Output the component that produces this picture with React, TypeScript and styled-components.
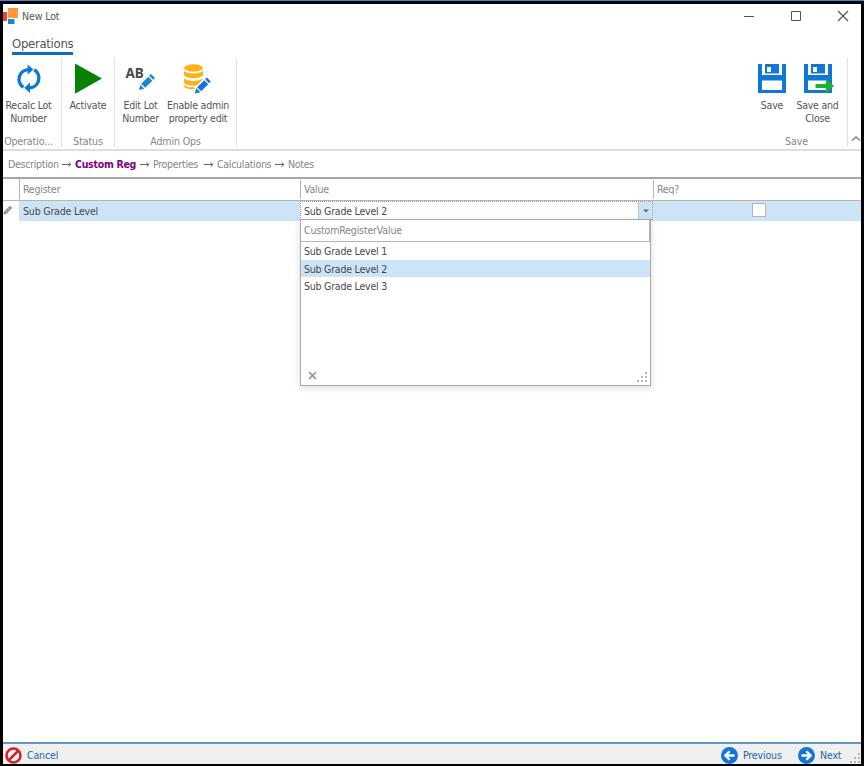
import React from "react";
import styled, { createGlobalStyle, css } from "styled-components";

const GlobalStyle = createGlobalStyle`
  *, *::before, *::after { box-sizing: border-box; }
  body { margin: 0; background: #000; }
`;

const Desktop = styled.div`
  width: 864px;
  height: 766px;
  padding: 3px 3px 2px;
  border-top: 1px solid #3a8ad0;
  background: #000;
  overflow: hidden;
  font-family: "DejaVu Sans Condensed", "DejaVu Sans", sans-serif;
  font-stretch: condensed;
  font-size: 10.5px;
  line-height: 13px;
  letter-spacing: -0.22px;
  color: #555;
`;

const Window = styled.main`
  width: 858px;
  height: 760px;
  display: flex;
  flex-direction: column;
  background: #fff;
`;

const TitleBar = styled.header`
  height: 31px;
  flex: none;
  display: flex;
  align-items: flex-start;
  svg { display: block; }
`;

const WindowTitle = styled.div`
  flex: 1;
  padding: 6px 0 0 3px;
  letter-spacing: -0.1px;
`;

const WindowButtons = styled.div`
  display: flex;
  padding: 6px 12px 0 0;
  gap: 35px;
`;

const TabStrip = styled.nav`
  height: 23px;
  flex: none;
  padding-left: 9px;
`;

const Tab = styled.div`
  width: 61px;
  height: 20px;
  border-bottom: 3px solid #0f6cbd;
  font-size: 13px;
  line-height: 18px;
  letter-spacing: -0.3px;
  white-space: nowrap;
`;

const Ribbon = styled.section`
  height: 93px;
  flex: none;
  display: flex;
  border-bottom: 2px solid #dedede;
`;

const RibbonGroup = styled.div<{ $width: number }>`
  width: ${(p) => p.$width}px;
  height: 89px;
  display: flex;
  flex-direction: column;
  border-right: 1px solid #e2e2e2;
`;

const RibbonButtons = styled.div<{ $pad?: number }>`
  height: 76px;
  flex: none;
  display: flex;
  justify-content: center;
  padding-right: ${(p) => p.$pad ?? 0}px;
`;

const RibbonButton = styled.div<{ $width: number }>`
  width: ${(p) => p.$width}px;
  display: flex;
  flex-direction: column;
  align-items: center;
  text-align: center;
  white-space: nowrap;
  svg { display: block; flex: none; margin: 4px 0 5px; }
`;

const GroupCaption = styled.div<{ $pad?: number }>`
  padding: 1px ${(p) => p.$pad ?? 0}px 0 0;
  text-align: center;
  letter-spacing: -0.1px;
  color: #858585;
  white-space: nowrap;
`;

const Spacer = styled.div`
  flex: 1;
`;

const CollapseSlot = styled.div`
  width: 13px;
  display: flex;
  align-items: flex-end;
  justify-content: flex-end;
  padding-bottom: 7px;
`;

const Breadcrumb = styled.nav`
  height: 26px;
  flex: none;
  display: flex;
  align-items: center;
  gap: 4px;
  padding: 1px 0 0 5px;
  letter-spacing: -0.28px;
  color: #858585;
  white-space: nowrap;
`;

const Step = styled.span<{ $width: number; $active?: boolean }>`
  width: ${(p) => p.$width}px;
  ${(p) =>
    p.$active &&
    css`
      font-weight: bold;
      color: #800080;
    `}
`;

const Grid = styled.section`
  flex: 1;
  border-top: 2px solid #a5a7a8;
`;

const columns = "17px 281px 353px 1fr";

const GridHeader = styled.div`
  display: grid;
  grid-template-columns: ${columns};
  height: 22px;
  border-bottom: 1px solid #b5b5b5;
  color: #858585;
`;

const HeaderCell = styled.div<{ $tall?: boolean }>`
  height: ${(p) => (p.$tall ? 21 : 19)}px;
  margin: ${(p) => (p.$tall ? "0 0 0 -1px" : "1px 0 1px -1px")};
  padding: ${(p) => (p.$tall ? 4 : 3)}px 0 0 3px;
  border-left: 1px solid #b5b5b5;
`;

const GridRow = styled.div`
  display: grid;
  grid-template-columns: ${columns};
  height: 20px;
  background: #cce4f6;
  color: #484848;
`;

const Indicator = styled.div`
  background: #fff;
  border-right: 1px solid #dcdcdc;
  padding-top: 4px;
  svg { display: block; }
`;

const Cell = styled.div`
  padding: 4px 0 0 3px;
  letter-spacing: -0.18px;
`;

const EditorCell = styled.div`
  position: relative;
  display: flex;
  height: 19px;
  margin-left: -1px;
  margin-right: 1px;
  background: #fff;
  border: 1px dotted #929292;
  border-bottom-style: solid;
`;

const EditorText = styled.div`
  flex: 1;
  padding: 3px 0 0 3px;
`;

const DropButton = styled.div`
  width: 14px;
  display: flex;
  align-items: center;
  justify-content: center;
  background: #cce4f6;
  border-left: 1px solid #aacbe2;
`;

const Popup = styled.div`
  position: absolute;
  left: -1px;
  top: 17px;
  width: 351px;
  height: 167px;
  display: flex;
  flex-direction: column;
  background: #fff;
  border: 1px solid #a9a9a9;
  box-shadow: 0 2px 7px rgba(0, 0, 0, 0.14);
`;

const PopupHeader = styled.div`
  height: 22px;
  flex: none;
  padding: 4px 0 0 3px;
  border-bottom: 1px solid #b5b5b5;
  border-right: 1px solid #b5b5b5;
  letter-spacing: -0.16px;
  color: #858585;
`;

const Option = styled.div<{ $selected?: boolean }>`
  height: 17.5px;
  flex: none;
  padding: 3px 0 0 3px;
  background: ${(p) => (p.$selected ? "#cce4f6" : "transparent")};
`;

const PopupFooter = styled.div`
  margin-top: auto;
  display: flex;
  justify-content: space-between;
  align-items: flex-end;
  padding: 0 3px 3px 7px;
  svg { display: block; }
`;

const ReqCell = styled.div`
  display: flex;
  justify-content: center;
  padding-top: 2px;
`;

const Checkbox = styled.div`
  width: 14px;
  height: 14px;
  margin-left: 3px;
  background: #fff;
  border: 1px solid #b4b4b4;
`;

const Footer = styled.footer`
  height: 22px;
  flex: none;
  display: flex;
  align-items: center;
  padding: 3px 0 0 2px;
  border-top: 2px solid #6795bc;
  background: #f0f0f0;
  letter-spacing: -0.15px;
  color: #1765a8;
  svg { display: block; }
`;

const FooterButton = styled.div<{ $width: number; $gap: number }>`
  width: ${(p) => p.$width}px;
  display: flex;
  align-items: center;
  gap: ${(p) => p.$gap}px;
`;

const GripSlot = styled.div`
  align-self: flex-end;
  padding-bottom: 1px;
`;

const AppLogo = () => (
  <svg width="16" height="20" viewBox="3 4 16 20">
    <path fill="#ef4040" d="M3 12h4v9H3z" />
    <path fill="#ff9838" d="M8 8h10v10H8z" />
    <path fill="#1c87c9" d="M8 19h6.5v5H8z" />
  </svg>
);

const RecalcIcon = () => (
  <svg width="32" height="32" viewBox="0 0 32 32">
    <g fill="none" stroke="#1177d7" strokeWidth="3.4">
      <path d="M10.4 25.4A9.700 9.700 0 0 1 15.500 7.600" />
      <path d="M21.200 7.800A9.700 9.700 0 0 1 16.500 25.800" />
    </g>
    <path fill="#1177d7" d="M14.600 2.400 20.400 7.600 14.600 12.800zM17 20.600 11.200 25.800 17 31z" />
  </svg>
);

const ActivateIcon = () => (
  <svg width="32" height="32" viewBox="0 0 32 32">
    <path fill="#078207" d="M3 1.5 30 16.6 3 31.8z" />
  </svg>
);

const PencilShape = ({ color }: { color: string }) => (
  <g fill={color}>
    <path d="M0 15 1.200 10 5 13.800z" />
    <path d="M2 9.200 8.700 2.500 12.500 6.300 5.800 13z" />
    <path d="M9.500 1.700 11.200 0 15 3.800 13.300 5.500z" />
  </g>
);

const Letters = styled.span`
  font-family: "Noto Sans", sans-serif;
  font-stretch: normal;
  font-size: 13.5px;
  font-weight: bold;
  line-height: 16px;
  letter-spacing: 0;
  color: #484848;
`;

const LettersIcon = styled.div`
  width: 32px;
  height: 32px;
  margin: 4px 0 5px;
  display: grid;
  & > * { grid-area: 1 / 1; }
  svg { margin: 12px 0 0 14px; overflow: visible; }
  ${Letters} { margin: 3px 0 0 1px; text-align: left; }
`;

const EditLotIcon = () => (
  <LettersIcon>
    <Letters>AB</Letters>
    <svg width="16" height="16" viewBox="0 0 15 15">
      <PencilShape color="#1c87c9" />
    </svg>
  </LettersIcon>
);

const DatabaseIcon = () => (
  <svg width="32" height="32" viewBox="0 0 32 32">
    <g fill="#ffb115">
      <ellipse cx="11.500" cy="6" rx="9.500" ry="3.700" />
      <path d="M2 8.600c2.500 4 16.500 4 19 0v4.700c-2.500 4-16.500 4-19 0z" />
      <path d="M2 16c2.500 4 16.500 4 19 0v4.700c-2.500 4-16.500 4-19 0z" />
      <path d="M2 22.500c1.500 2.800 8 3.200 12 2.600v2C8 27.600 3 26.500 2 24.500z" />
    </g>
    <g transform="translate(13 15.500) scale(1.060)">
      <path d="M-1.500 16.500 0 9.200 11 -1.500 16.500 4 6.500 14.500z" fill="#fff" />
      <PencilShape color="#1177d7" />
    </g>
  </svg>
);

const SaveIcon = ({ arrow }: { arrow?: boolean }) => (
  <svg width="32" height="32" viewBox="0 0 32 32">
    <path
      fill="#1177d7"
      fillRule="evenodd"
      d="M2 2h4v11h20V2h4v29H2zM6 18.500V28h20v-9.500z"
    />
    <path fill="#1177d7" fillRule="evenodd" d="M9 2h14v9.500H9zM11 5v5h4V5z" />
    {arrow && <path fill="#20b12a" d="M13.500 22h10.500v-5.500l8 7.500-8 7.500v-5.500h-10.500z" />}
  </svg>
);

const ArrowSvg = styled.svg`
  flex: none;
  margin-right: -1px;
`;

const Arrow = () => (
  <ArrowSvg width="10" height="9" viewBox="0 0 10 9">
    <path d="M0 4.500h9M6.500 2.500 9 4.500 6.500 6.500" fill="none" stroke="#666" />
  </ArrowSvg>
);

const Grip = () => (
  <svg width="11" height="10" viewBox="0 0 11 10" fill="#b4b4b4">
    <path d="M9 0h2v2H9zM5 4h2v2H5zM9 4h2v2H9zM1 8h2v2H1zM5 8h2v2H5zM9 8h2v2H9z" />
  </svg>
);

const NavIcon = ({ forward }: { forward?: boolean }) => (
  <svg width="17" height="17" viewBox="0 0 17 17">
    <circle cx="8.500" cy="8.500" r="8.500" fill="#1177d7" />
    <g transform={forward ? "matrix(-1 0 0 1 17 0)" : undefined}>
      <path d="M13.500 8.500H5M8.600 4.200 4.300 8.500l4.300 4.300" fill="none" stroke="#fff" strokeWidth="2.300" />
    </g>
  </svg>
);

const steps = [
  { label: "Description", width: 50 },
  { label: "Custom Reg", width: 61, active: true },
  { label: "Properties", width: 47 },
  { label: "Calculations", width: 54 },
  { label: "Notes", width: 26 },
];

const options = ["Sub Grade Level 1", "Sub Grade Level 2", "Sub Grade Level 3"];

export default function App() {
  return (
    <>
      <GlobalStyle />
      <Desktop>
        <Window>
          <TitleBar>
            <AppLogo />
            <WindowTitle>New Lot</WindowTitle>
            <WindowButtons>
              <svg width="12" height="12" viewBox="0 0 12 12">
                <path d="M1 6.500h10" stroke="#555" />
              </svg>
              <svg width="12" height="12" viewBox="0 0 12 12">
                <path d="M1.500 1.500h9v9h-9z" fill="none" stroke="#555" />
              </svg>
              <svg width="12" height="12" viewBox="0 0 12 12">
                <path d="M1 1l10 10M11 1 1 11" stroke="#555" strokeWidth="1.200" />
              </svg>
            </WindowButtons>
          </TitleBar>
          <TabStrip>
            <Tab>Operations</Tab>
          </TabStrip>
          <Ribbon>
            <RibbonGroup $width={59}>
              <RibbonButtons $pad={7}>
                <RibbonButton $width={52}>
                  <RecalcIcon />
                  Recalc Lot
                  <br />
                  Number
                </RibbonButton>
              </RibbonButtons>
              <GroupCaption $pad={7}>Operatio...</GroupCaption>
            </RibbonGroup>
            <RibbonGroup $width={53}>
              <RibbonButtons>
                <RibbonButton $width={52}>
                  <ActivateIcon />
                  Activate
                </RibbonButton>
              </RibbonButtons>
              <GroupCaption>Status</GroupCaption>
            </RibbonGroup>
            <RibbonGroup $width={122}>
              <RibbonButtons $pad={1}>
                <RibbonButton $width={46}>
                  <EditLotIcon />
                  Edit Lot
                  <br />
                  Number
                </RibbonButton>
                <RibbonButton $width={69}>
                  <DatabaseIcon />
                  Enable admin
                  <br />
                  property edit
                </RibbonButton>
              </RibbonButtons>
              <GroupCaption>Admin Ops</GroupCaption>
            </RibbonGroup>
            <Spacer />
            <RibbonGroup $width={102}>
              <RibbonButtons>
                <RibbonButton $width={42}>
                  <SaveIcon />
                  Save
                </RibbonButton>
                <RibbonButton $width={49}>
                  <SaveIcon arrow />
                  Save and
                  <br />
                  Close
                </RibbonButton>
              </RibbonButtons>
              <GroupCaption>Save</GroupCaption>
            </RibbonGroup>
            <CollapseSlot>
              <svg width="10" height="7" viewBox="0 0 10 7">
                <path d="M1 5.500 5 1.800 9 5.500" fill="none" stroke="#777" strokeWidth="1.300" />
              </svg>
            </CollapseSlot>
          </Ribbon>
          <Breadcrumb>
            {steps.map((s, i) => (
              <React.Fragment key={s.label}>
                {i > 0 && <Arrow />}
                <Step $width={s.width} $active={s.active}>
                  {s.label}
                </Step>
              </React.Fragment>
            ))}
          </Breadcrumb>
          <Grid>
            <GridHeader>
              <div />
              <HeaderCell $tall>Register</HeaderCell>
              <HeaderCell>Value</HeaderCell>
              <HeaderCell>Req?</HeaderCell>
            </GridHeader>
            <GridRow>
              <Indicator>
                <svg width="10" height="10" viewBox="0 0 10 10">
                  <path d="M1 9 2 6.300 7 1.300 8.700 3 3.700 8z" fill="#aaa" stroke="#666" strokeWidth=".8" />
                </svg>
              </Indicator>
              <Cell>Sub Grade Level</Cell>
              <EditorCell>
                <EditorText>Sub Grade Level 2</EditorText>
                <DropButton>
                  <svg width="6" height="4" viewBox="0 0 6 4">
                    <path d="M0 .5h6L3 3.500z" fill="#666" />
                  </svg>
                </DropButton>
                <Popup>
                  <PopupHeader>CustomRegisterValue</PopupHeader>
                  {options.map((o, i) => (
                    <Option key={o} $selected={i === 1}>
                      {o}
                    </Option>
                  ))}
                  <PopupFooter>
                    <svg width="9" height="12" viewBox="0 0 9 12">
                      <path d="M1 2l7 7M8 2 1 9" stroke="#888" strokeWidth="1.400" />
                    </svg>
                    <Grip />
                  </PopupFooter>
                </Popup>
              </EditorCell>
              <ReqCell>
                <Checkbox />
              </ReqCell>
            </GridRow>
          </Grid>
          <Footer>
            <FooterButton $width={716} $gap={5}>
              <svg width="17" height="17" viewBox="0 0 17 17">
                <circle cx="8.500" cy="8.500" r="7" fill="#fff" stroke="#d6202a" strokeWidth="2.600" />
                <path d="M13 4 4 13" stroke="#d6202a" strokeWidth="2.600" />
              </svg>
              Cancel
            </FooterButton>
            <FooterButton $width={77} $gap={5}>
              <NavIcon />
              Previous
            </FooterButton>
            <FooterButton $width={51} $gap={5}>
              <NavIcon forward />
              Next
            </FooterButton>
            <GripSlot>
              <Grip />
            </GripSlot>
          </Footer>
        </Window>
      </Desktop>
    </>
  );
}
